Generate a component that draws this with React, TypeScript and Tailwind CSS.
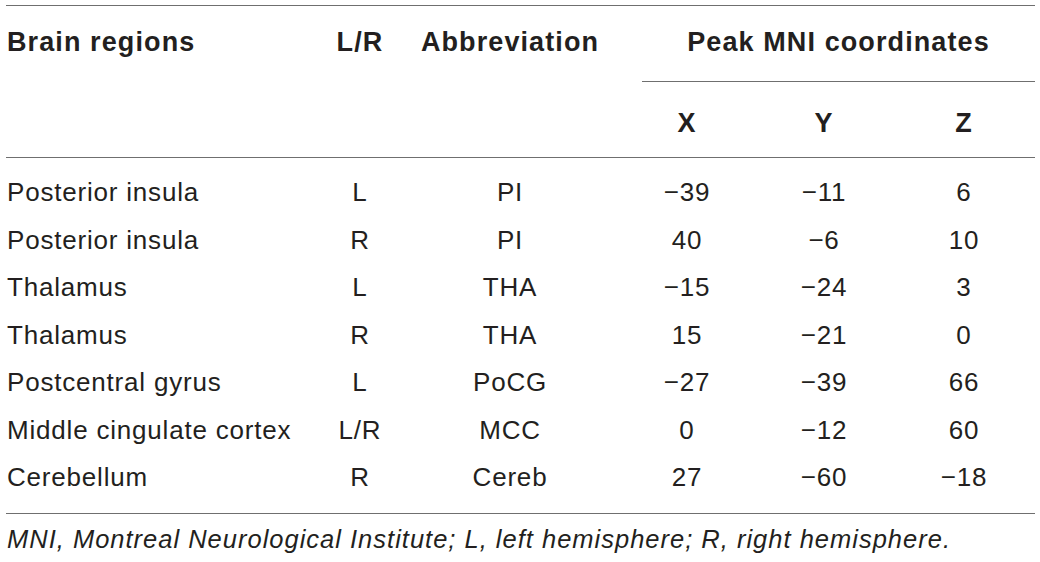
const rows = [
  ["Posterior insula", "L", "PI", "\u221239", "\u221211", "6"],
  ["Posterior insula", "R", "PI", "40", "\u22126", "10"],
  ["Thalamus", "L", "THA", "\u221215", "\u221224", "3"],
  ["Thalamus", "R", "THA", "15", "\u221221", "0"],
  ["Postcentral gyrus", "L", "PoCG", "\u221227", "\u221239", "66"],
  ["Middle cingulate cortex", "L/R", "MCC", "0", "\u221212", "60"],
  ["Cerebellum", "R", "Cereb", "27", "\u221260", "\u221218"],
];

const cols = "grid grid-cols-[314px_80px_242px_90px_184px_119px]";

export default function App() {
  return (
    <div
      className="w-[1040px] h-[562px] bg-white text-[#231f20] pt-[5px] pl-[6px] overflow-hidden"
      style={{ fontFamily: '"Liberation Sans", Arial, sans-serif' }}
    >
      <div className="w-[1029px]">
        {/* Header */}
        <div className={`${cols} border-t border-b border-[#6f6f6f] text-[27px] font-bold tracking-[1.1px]`}>
          <div className="row-span-2 pt-[23px] pl-px leading-none">Brain regions</div>
          <div className="row-span-2 pt-[23px] text-center leading-none">L/R</div>
          <div className="row-span-2 pt-[23px] pr-[22px] text-center leading-none">Abbreviation</div>
          <div className="col-span-3 h-[76px] pt-[23px] text-center leading-none border-b border-[#6f6f6f]">
            Peak MNI coordinates
          </div>
          <div className="h-[75px] pt-[8px] flex items-center justify-center">X</div>
          <div className="h-[75px] pt-[8px] flex items-center justify-center">Y</div>
          <div className="h-[75px] pt-[8px] flex items-center justify-center pr-[23px]">Z</div>
        </div>

        {/* Body */}
        <div className="py-[11px] border-b border-[#6f6f6f] text-[26px] tracking-[0.8px]">
          {rows.map((r, i) => (
            <div key={i} className={`${cols} h-[47.5px] items-center`}>
              <div className="pl-px">{r[0]}</div>
              <div className="text-center">{r[1]}</div>
              <div className="text-center pr-[22px]">{r[2]}</div>
              <div className="text-center">{r[3]}</div>
              <div className="text-center">{r[4]}</div>
              <div className="text-center pr-[23px]">{r[5]}</div>
            </div>
          ))}
        </div>

        <p className="pt-[13px] pl-px text-[25.5px] italic leading-none tracking-[1px]">
          MNI, Montreal Neurological Institute; L, left hemisphere; R, right hemisphere.
        </p>
      </div>
    </div>
  );
}
